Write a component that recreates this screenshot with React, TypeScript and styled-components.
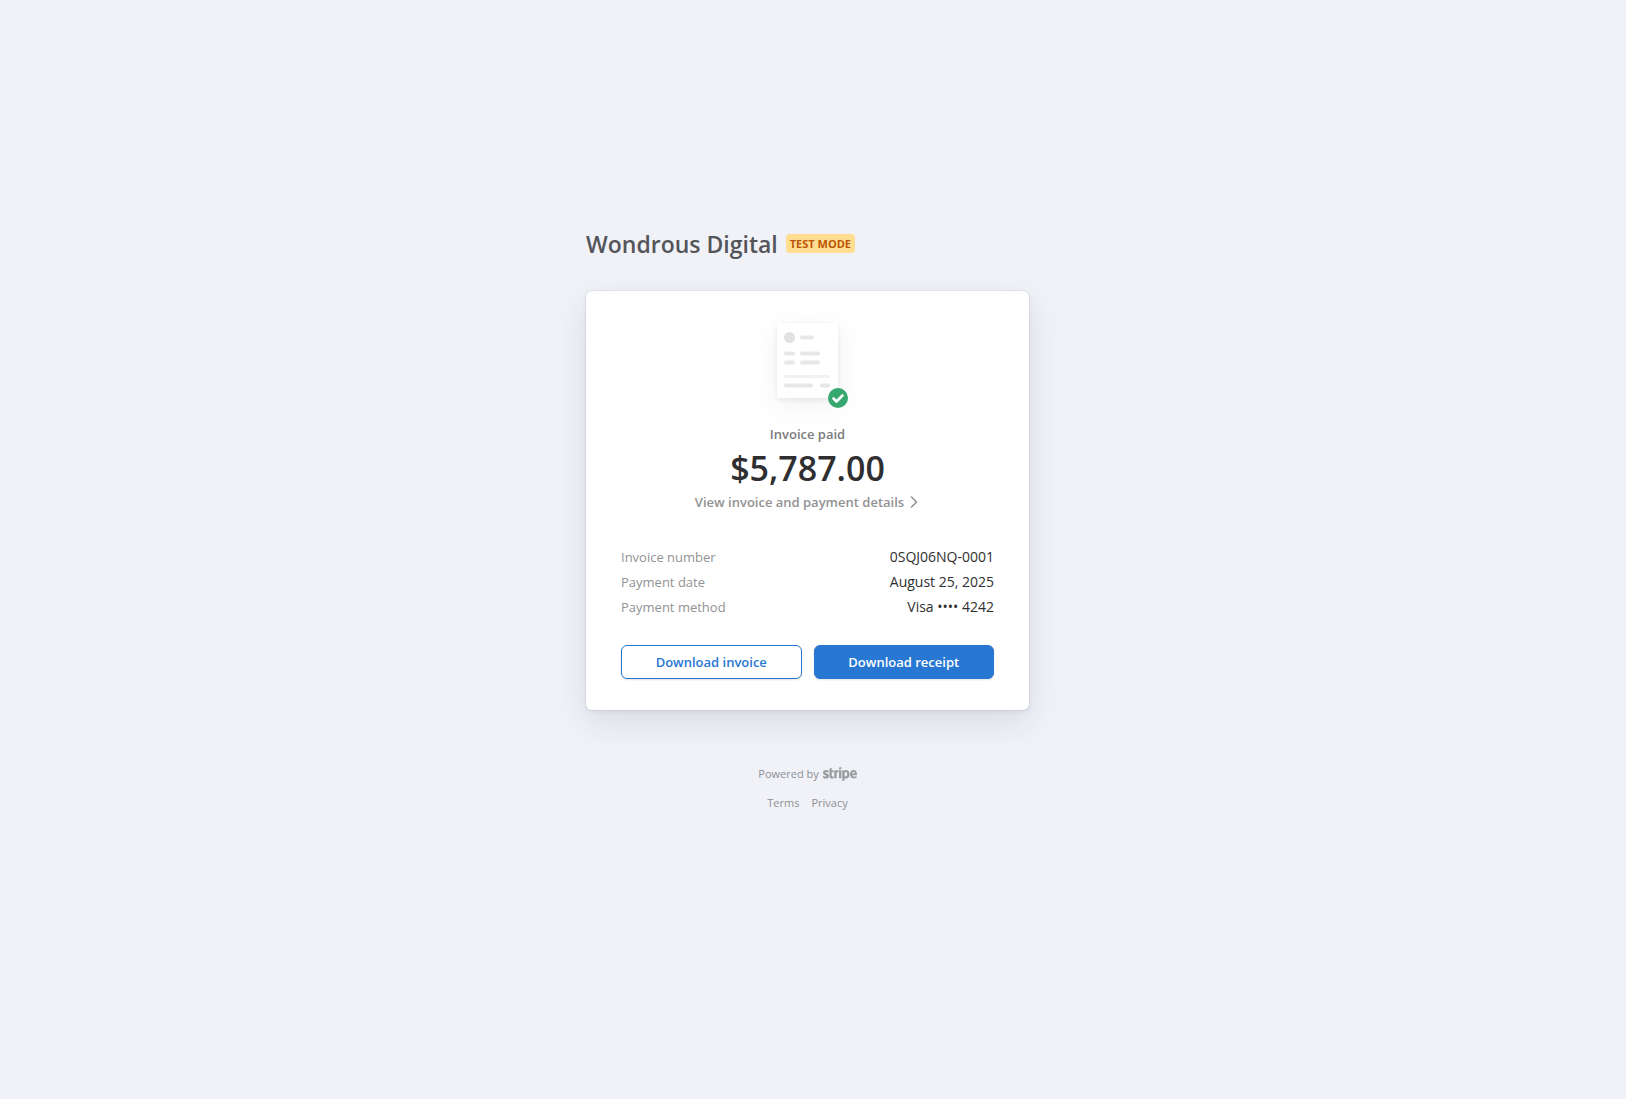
import React from "react";
import styled, { createGlobalStyle, css } from "styled-components";
import { FaStripe } from "react-icons/fa";

const GlobalStyle = createGlobalStyle`
  *, *::before, *::after { box-sizing: border-box; }
  body {
    margin: 0;
    background: #f0f2f8;
    color: #2f2f31;
    font-family: "Segoe UI", "Open Sans", "Noto Sans", sans-serif;
    font-size: 13px;
    line-height: 20px;
  }
`;

const Page = styled.div`
  min-height: 100vh;
  display: flex;
  flex-direction: column;
  align-items: center;
  justify-content: center;
  padding: 24px 27px 83px 16px;
`;

const Column = styled.div`
  width: 100%;
  max-width: 443px;
`;

const Header = styled.header`
  display: flex;
  align-items: center;
  gap: 8px;
  margin-bottom: 31px;
`;

const Merchant = styled.h1`
  margin: 0;
  font-size: 23px;
  line-height: 32px;
  font-weight: 600;
  color: #545559;
`;

const Badge = styled.span`
  padding: 0 4px;
  border-radius: 4px;
  background: #ffde92;
  color: #bb5504;
  font-size: 11px;
  line-height: 19px;
  font-weight: 700;
`;

const Card = styled.main`
  display: flex;
  flex-direction: column;
  align-items: center;
  padding: 20px 35px 31px;
  border-radius: 6px;
  background: #ffffff;
  box-shadow: 0 0 0 1px rgba(50, 50, 80, 0.06), 0 2px 5px rgba(50, 50, 70, 0.07),
    0 12px 32px rgba(50, 50, 75, 0.11);
`;

const Illustration = styled.svg`
  display: block;
  overflow: visible;
`;

const Status = styled.p`
  margin: 3px 0 0;
  font-weight: 600;
  color: #7b7b7d;
`;

const Amount = styled.p`
  margin: 4px 0;
  font-size: 34px;
  line-height: 40px;
  font-weight: 600;
  color: #2f2f31;
`;

const DetailsLink = styled.a`
  display: flex;
  align-items: center;
  gap: 4px;
  font-weight: 600;
  color: #929294;
  text-decoration: none;
`;

const Facts = styled.dl`
  width: 100%;
  margin: 35px 0 28px;
  display: grid;
  gap: 5px;
`;

const Fact = styled.div`
  display: flex;
  justify-content: space-between;
  align-items: baseline;
`;

const Term = styled.dt`
  color: #929294;
`;

const Value = styled.dd`
  margin: 0;
  font-size: 14px;
  color: #2f2f31;
`;

const Actions = styled.div`
  width: 100%;
  display: grid;
  grid-template-columns: 1fr 1fr;
  gap: 12px;
`;

const Button = styled.button<{ $primary?: boolean }>`
  height: 34px;
  padding: 0 12px;
  border: 1px solid #2777d3;
  border-radius: 6px;
  font: inherit;
  font-weight: 600;
  cursor: pointer;
  box-shadow: 0 1px 2px rgba(0, 0, 0, 0.12);
  ${({ $primary }) =>
    $primary
      ? css`
          background: #2777d3;
          color: #ffffff;
        `
      : css`
          background: #ffffff;
          color: #2777d3;
        `}
`;

const Footer = styled.footer`
  display: flex;
  flex-direction: column;
  align-items: center;
  gap: 9px;
  margin-top: 54px;
  font-size: 11px;
  color: #8e8f94;
`;

const FooterRow = styled.div`
  display: flex;
  align-items: center;
  gap: 12px;
`;

const FooterLink = styled.a`
  display: flex;
  align-items: center;
  gap: 4px;
  color: inherit;
  text-decoration: none;
`;

const StripeMark = styled(FaStripe)`
  width: 34px;
  height: 28px;
  margin: -4px 0;
  color: #9b9c9f;
`;

const InvoicePaid = () => (
  <Illustration width="120" height="110" viewBox="0 0 120 110" role="img" aria-label="Paid invoice">
    <defs>
      <filter id="sheet-shadow" x="-100%" y="-100%" width="300%" height="300%">
        <feDropShadow dx="0" dy="2" stdDeviation="3" floodColor="#000" floodOpacity="0.07" />
        <feDropShadow dx="0" dy="6" stdDeviation="14" floodColor="#000" floodOpacity="0.06" />
      </filter>
    </defs>
    <rect x="29" y="12" width="61" height="75" rx="4" fill="#fff" filter="url(#sheet-shadow)" />
    <circle cx="41.500" cy="26.500" r="5.500" fill="#e1e1e1" />
    <g fill="#e7e7e7">
      <rect x="52" y="24.500" width="14" height="4" rx="2" />
      <rect x="36" y="40.500" width="11" height="4" rx="2" />
      <rect x="52" y="40.500" width="20" height="4" rx="2" />
      <rect x="36" y="49.500" width="11" height="4" rx="2" />
      <rect x="52" y="49.500" width="20" height="4" rx="2" />
      <rect x="36" y="72.500" width="29" height="4" rx="2" />
      <rect x="72" y="72.500" width="10" height="4" rx="2" />
    </g>
    <rect x="36" y="64" width="46" height="3" rx="1" fill="#f2f2f2" />
    <circle cx="90" cy="87" r="10" fill="#35a76f" />
    <path d="M85.500 87.500 88.500 90.500 94.500 84.500" fill="none" stroke="#fff" strokeWidth="2.600" strokeLinecap="round" strokeLinejoin="round" />
  </Illustration>
);

const Chevron = () => (
  <svg width="12" height="12" viewBox="0 0 12 12" aria-hidden="true">
    <path d="M3.500 1 8.500 6 3.500 11" fill="none" stroke="currentColor" strokeWidth="1.600" strokeLinecap="round" strokeLinejoin="round" />
  </svg>
);

const facts = [
  { term: "Invoice number", value: "0SQJ06NQ-0001" },
  { term: "Payment date", value: "August 25, 2025" },
  { term: "Payment method", value: "Visa •••• 4242" },
];

export default function App() {
  return (
    <>
      <GlobalStyle />
      <Page>
        <Column>
          <Header>
            <Merchant>Wondrous Digital</Merchant>
            <Badge>TEST MODE</Badge>
          </Header>
          <Card>
            <InvoicePaid />
            <Status>Invoice paid</Status>
            <Amount>$5,787.00</Amount>
            <DetailsLink href="#details">
              View invoice and payment details
              <Chevron />
            </DetailsLink>
            <Facts>
              {facts.map(({ term, value }) => (
                <Fact key={term}>
                  <Term>{term}</Term>
                  <Value>{value}</Value>
                </Fact>
              ))}
            </Facts>
            <Actions>
              <Button type="button">Download invoice</Button>
              <Button type="button" $primary>
                Download receipt
              </Button>
            </Actions>
          </Card>
          <Footer>
            <FooterLink href="#stripe">
              Powered by <StripeMark role="img" aria-label="stripe" />
            </FooterLink>
            <FooterRow>
              <FooterLink href="#terms">Terms</FooterLink>
              <FooterLink href="#privacy">Privacy</FooterLink>
            </FooterRow>
          </Footer>
        </Column>
      </Page>
    </>
  );
}
